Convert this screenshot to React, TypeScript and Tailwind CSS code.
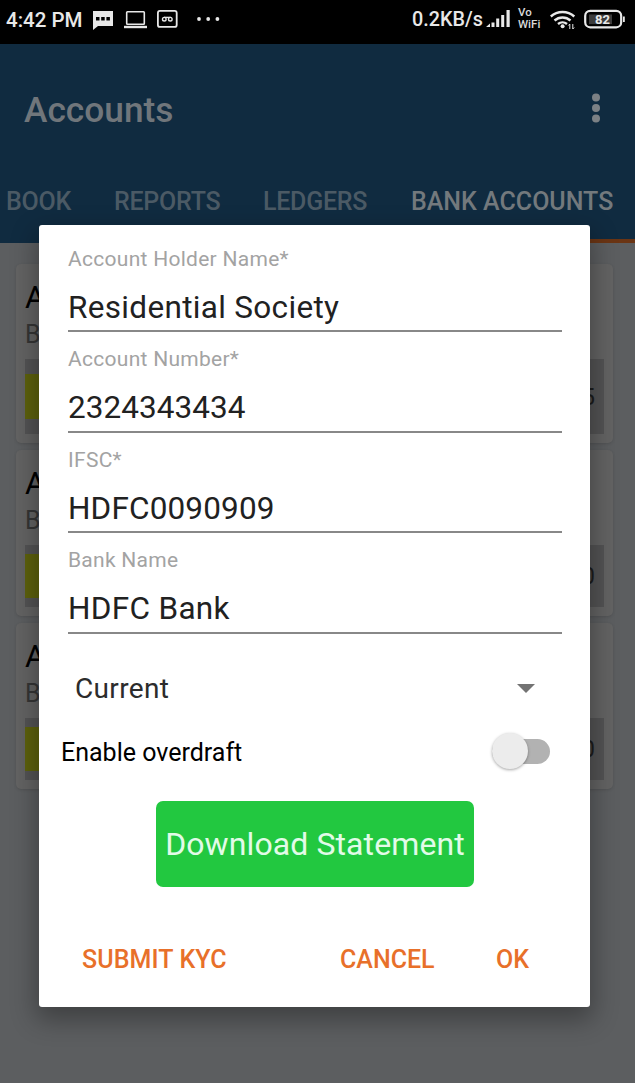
import { clsx } from "clsx";

const tabs = [
  { label: "BOOK", className: "ml-1.5 w-[108px]" },
  { label: "REPORTS", className: "w-[149px]" },
  { label: "LEDGERS", className: "w-[148px]" },
  { label: "BANK ACCOUNTS", active: true, className: "" },
];

const accounts = [
  { amount: "5", height: "h-[179px]", bar: "h-[75px] py-[15px]" },
  { amount: "0", height: "h-[166px]", bar: "h-[62px] py-[9px]" },
  { amount: "0", height: "h-[166px]", bar: "h-[62px] py-[9px]" },
];

const fields = [
  { label: "Account Holder Name*", value: "Residential Society", tracking: "tracking-[0.32px]" },
  { label: "Account Number*", value: "2324343434", tracking: "tracking-[0.05px]" },
  { label: "IFSC*", value: "HDFC0090909", tracking: "tracking-[0.15px]" },
  { label: "Bank Name", value: "HDFC Bank", tracking: "tracking-[0.32px]" },
];

function StatusBar() {
  return (
    <div className="flex h-11 items-start bg-black pt-[7px] text-[#e8e8e8]">
      <span className="ml-1.5 w-[86px] shrink-0 text-[20.5px] leading-[26px] font-medium whitespace-nowrap">4:42 PM</span>
      <svg className="mt-1 h-5 w-[22px] shrink-0" viewBox="0 0 22 20">
        <path d="M1 0h20v15H6l-5 4z" fill="currentColor" />
        <path d="M4 6h3.5v3.5H4zM9.2 6h3.5v3.5H9.2zM14.4 6h3.5v3.5h-3.5z" fill="#000" />
      </svg>
      <svg className="mt-1 ml-[10px] h-[18px] w-[23px] shrink-0" viewBox="0 0 23 18">
        <rect x="2.7" y=".8" width="17.6" height="12.4" rx=".7" fill="none" stroke="currentColor" strokeWidth="1.6" />
        <path d="M0 14.8h23v2.4H0z" fill="currentColor" />
      </svg>
      <svg className="mt-[3px] ml-[10px] h-[18px] w-[21px] shrink-0" viewBox="0 0 21 18">
        <rect x=".9" y=".9" width="18.8" height="16" rx="2" fill="none" stroke="currentColor" strokeWidth="1.8" />
        <g fill="none" stroke="currentColor" strokeWidth="1.4">
          <circle cx="7.3" cy="9.2" r="1.8" />
          <circle cx="13.3" cy="9.2" r="1.8" />
          <path d="M7 7.4h6.5" />
        </g>
      </svg>
      <svg className="mt-[10px] ml-[19px] h-1 w-[23px] shrink-0" viewBox="0 0 23 4" fill="currentColor">
        <circle cx="2" cy="2" r="1.9" />
        <circle cx="11.2" cy="2" r="1.9" />
        <circle cx="20.4" cy="2" r="1.9" />
      </svg>
      <span className="ml-auto w-[74px] shrink-0 text-[19.8px] leading-[26px] font-medium whitespace-nowrap">0.2KB/s</span>
      <svg className="mt-[3px] h-[18px] w-[25px] shrink-0" viewBox="0 0 25 18" fill="currentColor">
        <path d="M0 17l4-3.6V17zM5.500 12.5h3V17h-3zM10.2 8.5h3V17h-3zM15.2 5h3v12h-3zM20.5 0h3.2v17h-3.2z" />
      </svg>
      <span className="ml-[7px] flex w-8 shrink-0 flex-col text-[11.5px] font-medium text-[#d8d8d8]">
        <span className="h-[11px] leading-[11px]">Vo</span>
        <span className="h-[11px] leading-[12px]">WiFi</span>
      </span>
      <svg className="mt-[3px] h-5 w-[26px] shrink-0" viewBox="0 0 26 20">
        <g fill="none" stroke="currentColor" strokeWidth="2.4">
          <path d="M.8 6.5a17.5 17.5 0 0 1 23.5 0" />
          <path d="M4.5 10.5a12 12 0 0 1 16 0" />
          <path d="M8 14a7 7 0 0 1 9 0" />
        </g>
        <circle cx="12.6" cy="16.2" r="2" fill="currentColor" />
        <path d="M19.8 19v-5l-1.4 1.5M22.8 14v5l1.4-1.5" fill="none" stroke="currentColor" strokeWidth="1" />
      </svg>
      <svg className="mt-[2px] mr-[9px] ml-2 h-5 w-[42px] shrink-0" viewBox="0 0 42 20">
        <rect x="1.2" y="1.9" width="36" height="16.4" rx="5" fill="none" stroke="currentColor" strokeWidth="2.2" />
        <rect x="5" y="5.5" width="23" height="9.6" fill="#3c3c3c" />
        <path d="M39 7.5h1.8V13H39z" fill="currentColor" />
        <text x="18.5" y="14.7" textAnchor="middle" fontSize="13" fontWeight="700" fill="currentColor">82</text>
      </svg>
    </div>
  );
}

function AppBar() {
  return (
    <header className="h-[199px] bg-[#102b40]">
      <div className="flex h-[131px] items-center justify-between pr-[34px] pl-6">
        <h1 className="pt-px text-[35.3px] leading-10 font-medium text-[#70767b]">Accounts</h1>
        <svg className="mb-[3px] h-[30px] w-2.5" viewBox="0 0 10 30" fill="#7c8185">
          <circle cx="5" cy="4.5" r="4" />
          <circle cx="5" cy="15" r="4" />
          <circle cx="5" cy="25.5" r="4" />
        </svg>
      </div>
      <nav className="flex h-[68px] overflow-hidden pt-3 text-[25px] leading-[30px] font-medium whitespace-nowrap">
        {tabs.map((tab) => (
          <div
            key={tab.label}
            className={clsx(
              "shrink-0",
              tab.className,
              tab.active ? "text-[#73797d]" : "tracking-[-0.25px] text-[#4b5a65]"
            )}
          >
            {tab.label}
          </div>
        ))}
      </nav>
    </header>
  );
}

function AccountCard({ account }: { account: (typeof accounts)[number] }) {
  return (
    <div
      className={clsx(
        "flex flex-col justify-between rounded-[5px] bg-[#636363] px-[9px] pt-[17px] pb-[9px] shadow-[0_1px_3px_rgba(0,0,0,0.12)]",
        account.height
      )}
    >
      <div>
        <div className="text-[31px] leading-[34px] text-black">A</div>
        <div className="text-[25px] leading-[40px] text-[#353535]">B</div>
      </div>
      <div className={clsx("flex justify-between bg-[#535354] pr-[9px]", account.bar)}>
        <div className="w-20 bg-[#5d610d]" />
        <span className="self-center text-[24px] leading-none text-[#1c1c1c]">{account.amount}</span>
      </div>
    </div>
  );
}

function Field({ label, value, tracking }: (typeof fields)[number]) {
  return (
    <label className="mr-7 ml-[29px] block h-[100.5px] border-b-2 border-[#888] pt-[14px]">
      <span className="block text-[21px] leading-[26px] tracking-[0.28px] text-[#a3a3a3]">{label}</span>
      <span className={clsx("mt-[18px] block text-[31.5px] leading-9 text-[#212121]", tracking)}>{value}</span>
    </label>
  );
}

function AccountDialog() {
  return (
    <div className="flex h-[782px] w-[551px] flex-col rounded-[3px] bg-white pt-[6.5px] shadow-[0_10px_26px_3px_rgba(0,0,0,0.32)]">
      {fields.map((field) => (
        <Field key={field.label} {...field} />
      ))}
      <div className="mt-[36.5px] flex h-9 items-center justify-between pr-[55px] pl-9">
        <span className="pt-0.5 text-[28px] tracking-[0.35px] text-[#2c2c2c]">Current</span>
        <svg className="h-[9px] w-[18px]" viewBox="0 0 18 9">
          <path d="M0 0h18L9 9z" fill="#737373" />
        </svg>
      </div>
      <div className="mt-[25px] flex h-10 items-center justify-between pr-10 pl-[22px]">
        <span className="pt-[3px] text-[25px] text-black">Enable overdraft</span>
        <div className="flex h-[25px] w-[58px] items-center rounded-full bg-[#b2b2b2]">
          <div className="size-[36px] shrink-0 rounded-full bg-[#ececec] shadow-[0_1px_3px_rgba(0,0,0,0.35)]" />
        </div>
      </div>
      <button className="mt-[29.5px] ml-[117px] h-[86px] w-[318px] shrink-0 rounded-[7px] bg-[#22c840] pt-px text-[32px] tracking-[0.1px] whitespace-nowrap text-[#e2fbe8]">
        Download Statement
      </button>
      <div className="mt-[57px] flex text-[25px] leading-8 font-medium whitespace-nowrap text-[#e8702a]">
        <button className="ml-[43px] w-[258px] text-left tracking-[0.1px]">SUBMIT KYC</button>
        <button className="w-[156px] text-left">CANCEL</button>
        <button>OK</button>
      </div>
    </div>
  );
}

export default function App() {
  return (
    <div className="relative h-[1083px] w-[635px] overflow-hidden bg-[#5c5e60] font-[Roboto,sans-serif]">
      <StatusBar />
      <AppBar />
      <div className="-mt-1 flex justify-end">
        <div className="h-1 w-[224px] bg-[#6b3514]" />
      </div>
      <main className="flex flex-col gap-[7px] pt-[21px] pr-[22px] pl-4">
        {accounts.map((account, i) => (
          <AccountCard key={i} account={account} />
        ))}
      </main>
      <div className="absolute inset-x-0 top-[225px] flex pl-[39px]">
        <AccountDialog />
      </div>
    </div>
  );
}
